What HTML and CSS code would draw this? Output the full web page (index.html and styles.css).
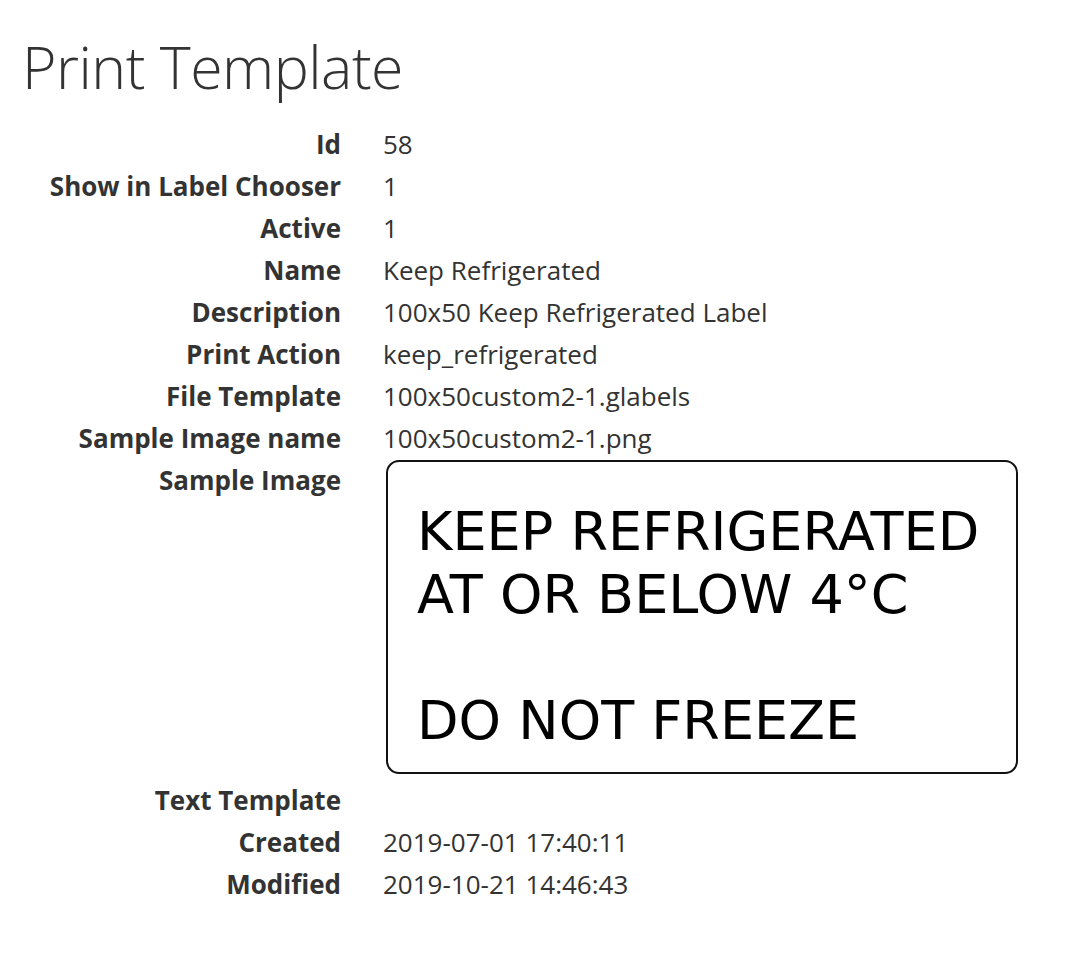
FILE: index.html
```html
<!DOCTYPE html>
<html lang="en">
<head>
    <meta charset="UTF-8">
    <meta name="viewport" content="width=device-width, initial-scale=1.0">
    <title>Print Template</title>
    <link rel="stylesheet" href="styles.css">
</head>
<body>
    <div class="page">
        <h1>Print Template</h1>

        <dl class="details">
            <dt>Id</dt>
            <dd>58</dd>

            <dt>Show in Label Chooser</dt>
            <dd>1</dd>

            <dt>Active</dt>
            <dd>1</dd>

            <dt>Name</dt>
            <dd>Keep Refrigerated</dd>

            <dt>Description</dt>
            <dd>100x50 Keep Refrigerated Label</dd>

            <dt>Print Action</dt>
            <dd>keep_refrigerated</dd>

            <dt>File Template</dt>
            <dd>100x50custom2-1.glabels</dd>

            <dt>Sample Image name</dt>
            <dd>100x50custom2-1.png</dd>

            <dt>Sample Image</dt>
            <dd>
                <!-- Sample label preview -->
                <div class="sample-label">
                    <p>KEEP REFRIGERATED</p>
                    <p>AT OR BELOW 4°C</p>
                    <p>&nbsp;</p>
                    <p>DO NOT FREEZE</p>
                </div>
            </dd>

            <dt>Text Template</dt>
            <dd></dd>

            <dt>Created</dt>
            <dd>2019-07-01 17:40:11</dd>

            <dt>Modified</dt>
            <dd>2019-10-21 14:46:43</dd>
        </dl>
    </div>
</body>
</html>
```

FILE: styles.css
```css
body {
    font-family: 'Open Sans', 'Lato', sans-serif;
    margin: 0;
    padding: 0;
    background: #fff;
    color: #333;
}

.page {
    padding: 0 20px;
}

h1 {
    font-size: 59px;
    font-weight: 300;
    margin: 0;
    padding: 24px 0 0 2px;
    line-height: 84px;
    letter-spacing: -0.5px;
}

.details {
    display: grid;
    grid-template-columns: 321px auto;
    column-gap: 42px;
    margin: 15px 0 0 0;
    font-size: 26px;
    line-height: 42px;
}

.details dt {
    font-weight: 700;
    text-align: right;
    min-height: 42px;
}

.details dd {
    margin: 0;
    min-height: 42px;
}

.sample-label {
    width: 632px;
    height: 314px;
    margin: 1px 0 5px 3px;
    border: 2px solid #111;
    border-radius: 13px;
    background: #fff;
    color: #000;
    font-family: 'DejaVu Sans', sans-serif;
    font-size: 54px;
    line-height: 63px;
    padding: 38px 0 0 29px;
    box-sizing: border-box;
}

.sample-label p {
    margin: 0;
}
```
